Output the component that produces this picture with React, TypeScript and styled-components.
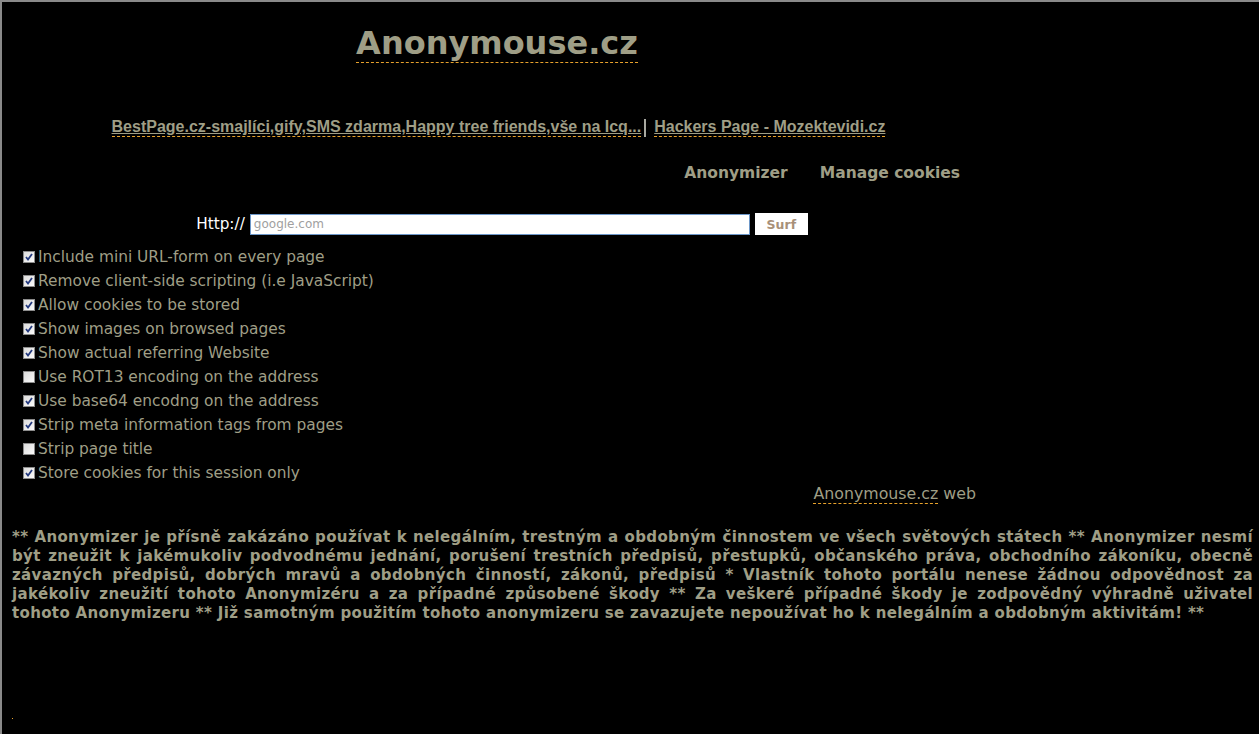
import React from 'react';
import styled, { createGlobalStyle } from 'styled-components';

const TEXT = '#9f9e86';
const DASH = '#e8a22c';

const GlobalStyle = createGlobalStyle`
  html, body {
    margin: 0;
    padding: 0;
    background: #000;
  }
  body {
    font-family: 'DejaVu Sans', Verdana, sans-serif;
    color: ${TEXT};
  }
`;

const options: { label: string; checked: boolean }[] = [
  { label: 'Include mini URL-form on every page', checked: true },
  { label: 'Remove client-side scripting (i.e JavaScript)', checked: true },
  { label: 'Allow cookies to be stored', checked: true },
  { label: 'Show images on browsed pages', checked: true },
  { label: 'Show actual referring Website', checked: true },
  { label: 'Use ROT13 encoding on the address', checked: false },
  { label: 'Use base64 encodng on the address', checked: true },
  { label: 'Strip meta information tags from pages', checked: true },
  { label: 'Strip page title', checked: false },
  { label: 'Store cookies for this session only', checked: true },
];

const disclaimer =
  '** Anonymizer je přísně zakázáno používat k nelegálním, trestným a obdobným činnostem ve všech světových státech ** Anonymizer nesmí být zneužit k jakémukoliv podvodnému jednání, porušení trestních předpisů, přestupků, občanského práva, obchodního zákoníku, obecně závazných předpisů, dobrých mravů a obdobných činností, zákonů, předpisů * Vlastník tohoto portálu nenese žádnou odpovědnost za jakékoliv zneužití tohoto Anonymizéru a za případné způsobené škody ** Za veškeré případné škody je zodpovědný výhradně  uživatel tohoto Anonymizeru ** Již samotným použitím tohoto anonymizeru se zavazujete nepoužívat ho k nelegálním a obdobným aktivitám! **';

const CheckBox: React.FC<{ checked: boolean }> = ({ checked }) => (
  <Box>
    {checked && (
      <svg width="10" height="10" viewBox="0 0 10 10">
        <path d="M2 5 L4 7.5 L8 2" fill="none" stroke="#23397e" strokeWidth="1.8" />
      </svg>
    )}
  </Box>
);

const App: React.FC = () => {
  return (
    <Page>
      <GlobalStyle />
      <Column>
        <TitleRow>
          <Title href="#">Anonymouse.cz</Title>
        </TitleRow>

        <LinksRow>
          <TopLink href="#">BestPage.cz-smajlíci,gify,SMS zdarma,Happy tree friends,vše na Icq...</TopLink>
          <Separator />
          <TopLink href="#">Hackers Page - Mozektevidi.cz</TopLink>
        </LinksRow>

        <Nav>
          <NavItem href="#">Anonymizer</NavItem>
          <NavItem href="#">Manage cookies</NavItem>
        </Nav>

        <Form>
          <Label>Http://</Label>
          <UrlInput placeholder="google.com" />
          <SurfButton>Surf</SurfButton>
        </Form>

        <OptionList>
          {options.map((o) => (
            <Option key={o.label}>
              <CheckBox checked={o.checked} />
              {o.label}
            </Option>
          ))}
        </OptionList>

        <WebRow>
          <WebLink href="#">Anonymouse.cz</WebLink> web
        </WebRow>
      </Column>

      <Disclaimer>{disclaimer}</Disclaimer>
      <Dot />
    </Page>
  );
};

const Page = styled.div`
  min-height: 100vh;
  box-sizing: border-box;
  border-top: 2px solid #8a8a8a;
  border-left: 2px solid #8a8a8a;
  padding: 0 6px 0 10px;
  background: #000;
`;

const Column = styled.div`
  width: 970px;
`;

const TitleRow = styled.div`
  text-align: center;
  padding-top: 23px;
`;

const Title = styled.a`
  display: inline-block;
  font-family: 'DejaVu Sans', Verdana, sans-serif;
  font-weight: 700;
  font-size: 32px;
  line-height: 37px;
  color: ${TEXT};
  text-decoration: none;
  border-bottom: 1px dashed ${DASH};
`;

const LinksRow = styled.div`
  display: flex;
  justify-content: center;
  align-items: center;
  margin-top: 55px;
  padding-left: 3px;
`;

const TopLink = styled.a`
  font-family: 'Liberation Sans', Arial, sans-serif;
  font-weight: 700;
  font-size: 16px;
  line-height: 18px;
  color: ${TEXT};
  text-decoration: underline;
  border-bottom: 1px dashed ${DASH};
`;

const Separator = styled.span`
  width: 2px;
  height: 18px;
  background: #a8a8a0;
  margin: 0 8px 0 3px;
`;

const Nav = styled.div`
  display: flex;
  justify-content: flex-end;
  gap: 32px;
  margin-top: 27px;
  padding-right: 22px;
`;

const NavItem = styled.a`
  font-weight: 700;
  font-size: 15.5px;
  line-height: 18px;
  color: ${TEXT};
  text-decoration: none;
`;

const Form = styled.div`
  display: flex;
  justify-content: center;
  align-items: center;
  gap: 5px;
  margin-top: 31px;
  padding-left: 10px;
  height: 22px;
`;

const Label = styled.span`
  color: #fff;
  font-size: 15.3px;
`;

const UrlInput = styled.input`
  width: 500px;
  height: 21px;
  box-sizing: border-box;
  border: 1px solid #6d97c8;
  padding: 0 3px;
  font-family: 'DejaVu Sans', Verdana, sans-serif;
  font-size: 12px;
  background: #fff;
  outline: none;
  &::placeholder {
    color: #a0a0a0;
  }
`;

const SurfButton = styled.button`
  width: 53px;
  height: 22px;
  border: none;
  background: #fff;
  color: #a89078;
  font-family: 'DejaVu Sans', Verdana, sans-serif;
  font-weight: 700;
  font-size: 12.5px;
  padding: 0;
`;

const OptionList = styled.div`
  margin-top: 10px;
  padding-left: 11px;
`;

const Option = styled.div`
  display: flex;
  align-items: center;
  height: 24px;
  font-size: 15.4px;
  color: ${TEXT};
`;

const Box = styled.span`
  display: inline-flex;
  align-items: center;
  justify-content: center;
  width: 12px;
  height: 12px;
  box-sizing: border-box;
  border: 1px solid #8c8c8c;
  background: linear-gradient(135deg, #dcdcdc, #fafafa);
  margin-right: 3px;
`;

const WebRow = styled.div`
  text-align: right;
  padding-right: 6px;
  font-size: 15.8px;
  line-height: 18px;
  color: ${TEXT};
`;

const WebLink = styled.a`
  color: ${TEXT};
  text-decoration: none;
  border-bottom: 1px dashed ${DASH};
`;

const Disclaimer = styled.p`
  margin: 25px 0 0;
  font-weight: 700;
  font-size: 15px;
  line-height: 19px;
  letter-spacing: 0.35px;
  text-align: justify;
  color: ${TEXT};
`;

const Dot = styled.div`
  width: 1px;
  height: 1px;
  background: ${DASH};
  margin-top: 95px;
`;

export default App;
